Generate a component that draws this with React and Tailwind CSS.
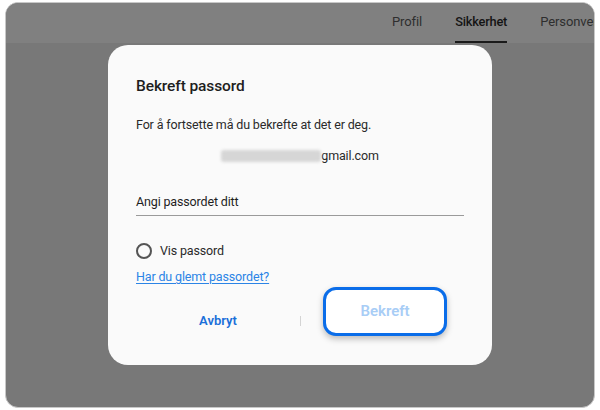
export default function App() {
  const font = { fontFamily: 'Roboto, "Noto Sans", sans-serif' };
  return (
    <div className="w-[600px] h-[410px] bg-white px-[5px] pt-[2px] pb-[2px]" style={font}>
      <div className="w-full h-full rounded-[13px] overflow-hidden border border-[#c8c8c8] bg-[#787878] flex flex-col">
        <div className="h-[40px] bg-[#808080] flex items-end pl-[386px] gap-[33px] whitespace-nowrap">
          <div className="h-full flex items-center text-[13px] tracking-[-0.1px] text-[#2e2e2e] pb-[2px]">Profil</div>
          <div className="h-full flex flex-col">
            <div className="flex-1 flex items-center text-[12.8px] tracking-[-0.2px] font-medium text-[#141414]">Sikkerhet</div>
            <div className="h-[2px] bg-[#1a1a1a]"></div>
          </div>
          <div className="h-full flex items-center text-[13px] tracking-[-0.1px] text-[#2e2e2e] pb-[2px]">Personvern</div>
        </div>
        <div className="flex-1 pl-[102px] pt-[2px]">
          <div className="w-[384px] h-[320px] bg-[#fafafa] rounded-[20px] flex flex-col pl-[28px] pr-[28px]">
            <div className="pt-[31px] text-[15.5px] tracking-[-0.1px] font-medium text-[#1e1e1e] leading-[20px]">Bekreft passord</div>
            <div className="mt-[20px] text-[12.5px] tracking-[-0.15px] text-[#2a2a2a] leading-[18px]">For å fortsette må du bekrefte at det er deg.</div>
            <div className="mt-[13px] flex items-center justify-center h-[18px]">
              <div className="w-[100px] h-[12px] bg-[#d6d6d6] blur-[1.5px] rounded-[3px]"></div>
              <span className="text-[12.5px] tracking-[-0.15px] text-[#2a2a2a] leading-[18px]">gmail.com</span>
            </div>
            <div className="mt-[28px] border-b border-[#9a9a9a] pb-[4px] text-[12.5px] tracking-[-0.15px] text-[#1e1e1e] leading-[18px]">Angi passordet ditt</div>
            <div className="mt-[26px] flex items-center gap-[8px] h-[18px]">
              <div className="w-[16px] h-[16px] rounded-full border-[2px] border-[#555]"></div>
              <span className="text-[12.5px] tracking-[-0.15px] text-[#2a2a2a]">Vis passord</span>
            </div>
            <div className="mt-[8px] text-[12.5px] tracking-[-0.15px] text-[#2b84e6] underline underline-offset-[2px] leading-[18px]">Har du glemt passordet?</div>
            <div className="mt-[1px] flex items-start">
              <div className="w-[164px] flex justify-center pt-[25px] text-[13px] font-semibold text-[#1a6fd9] leading-[18px]">Avbryt</div>
              <div className="w-[1px] h-[10px] bg-[#d4d4d4] mt-[29px]"></div>
              <div className="ml-[22px] w-[124px] h-[49px] rounded-[13px] border-[3px] border-[#0a6de9] bg-white shadow-[0_3px_6px_rgba(0,0,0,0.25)] flex items-center justify-center text-[15px] font-semibold text-[#a8cdf6]">Bekreft</div>
            </div>
          </div>
        </div>
      </div>
    </div>
  );
}
